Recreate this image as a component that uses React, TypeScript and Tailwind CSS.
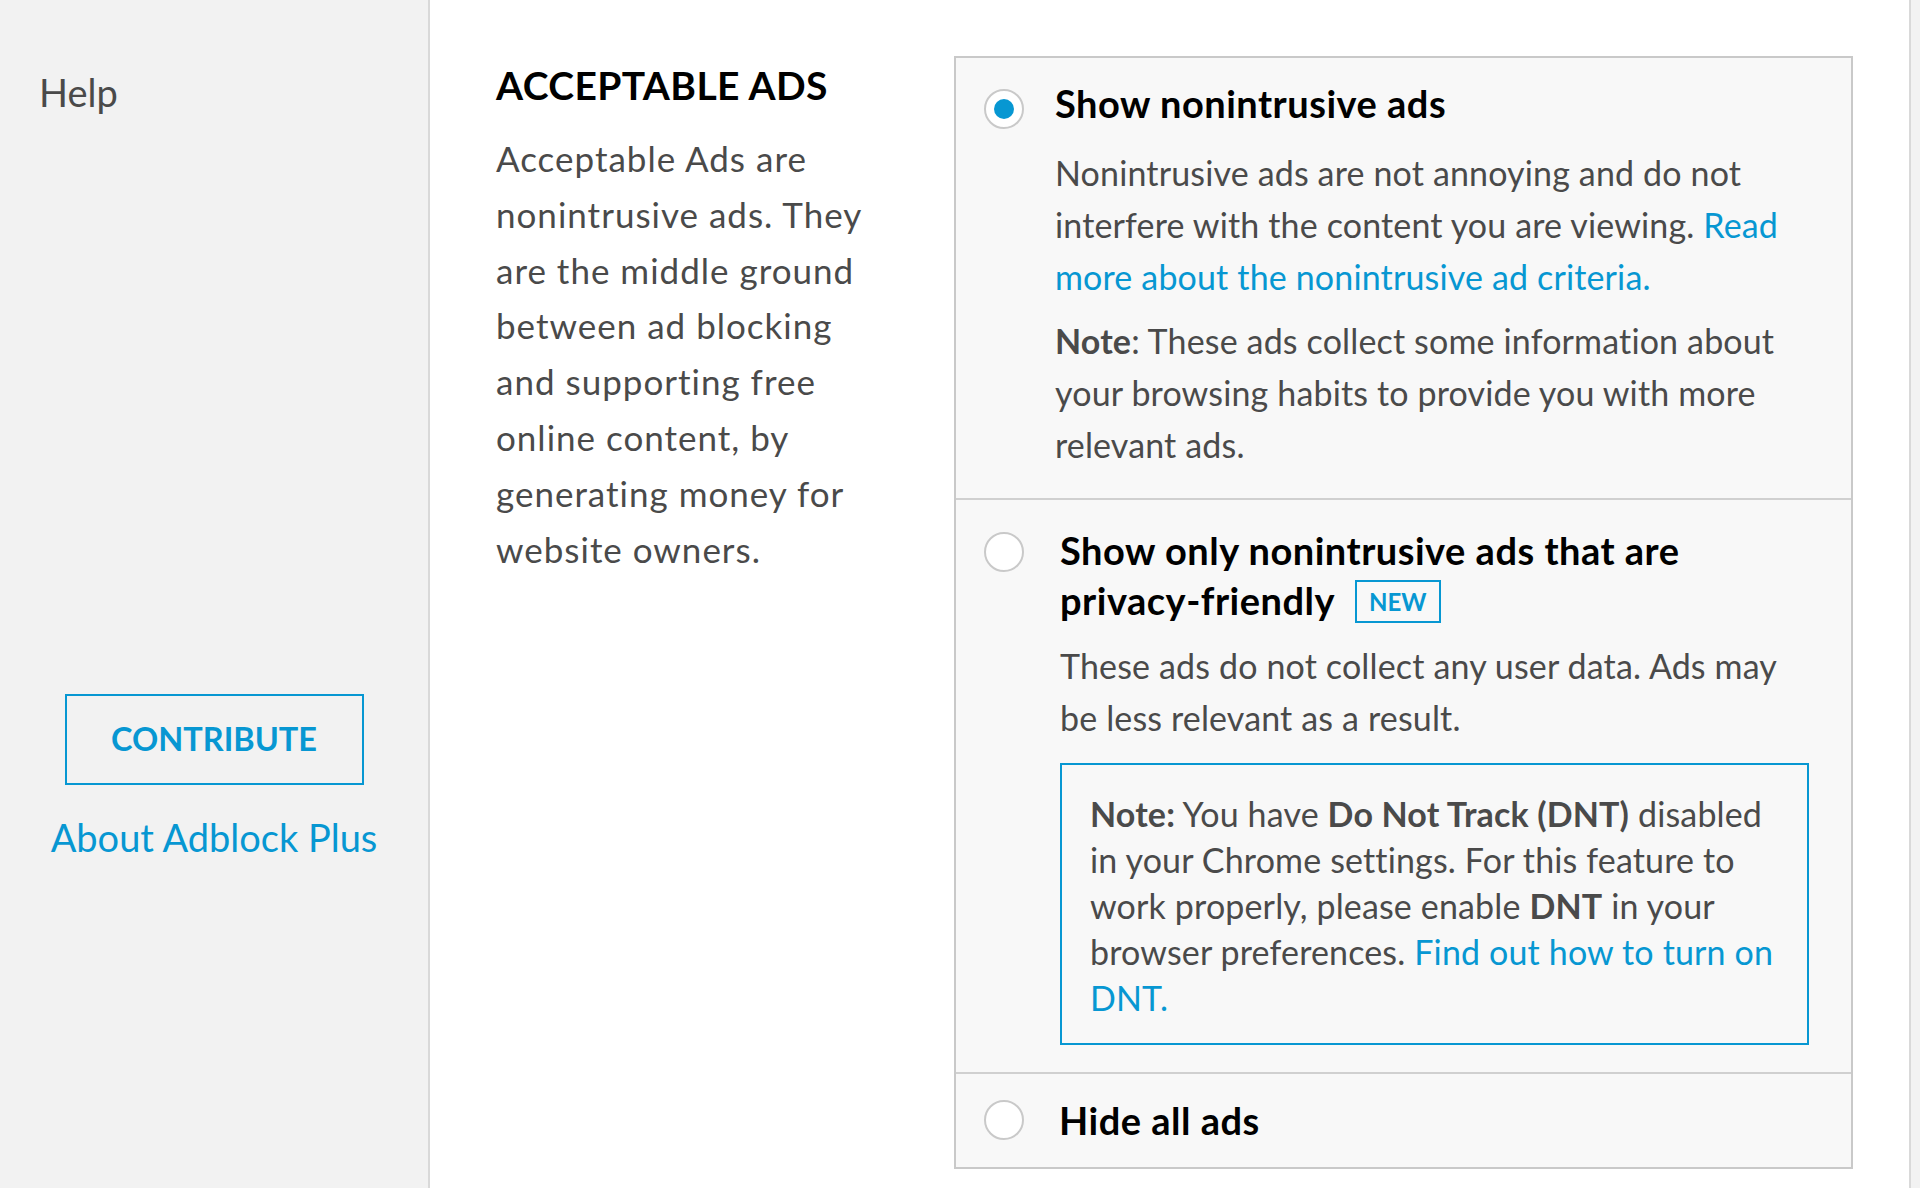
import React from "react";

const blue = "text-[#0797d2]";

function Radio({ checked }: { checked?: boolean }) {
  return (
    <span className="flex h-[40px] w-[40px] shrink-0 items-center justify-center rounded-full border-2 border-[#c9c9c9] bg-white">
      {checked && <span className="h-[20px] w-[20px] rounded-full bg-[#0797d2]" />}
    </span>
  );
}

export default function App() {
  return (
    <div className="flex min-h-screen bg-white font-['Lato',sans-serif] antialiased">
      <aside className="flex w-[430px] shrink-0 flex-col border-r-2 border-[#d9d9d9] bg-[#f2f2f2]">
        <a href="#" className="ml-[39px] mt-[68px] text-[38px] leading-[48px] text-[#4a4a4a]">
          Help
        </a>
        <div className="mt-[578px] flex flex-col items-center">
          <button
            type="button"
            className={`h-[91px] w-[299px] border-2 border-[#0797d2] text-[32.5px] font-bold ${blue}`}
          >
            CONTRIBUTE
          </button>
          <a href="#" className={`mt-[28px] text-[38px] leading-[48px] ${blue}`}>
            About Adblock Plus
          </a>
        </div>
      </aside>

      <main className="flex flex-1 items-start pl-[66px] pt-[56px]">
        <section className="w-[458px] shrink-0 pt-[5px]">
          <h2 className="text-[39px] font-bold leading-[48px] tracking-[0.4px] text-black">
            ACCEPTABLE ADS
          </h2>
          <p className="mt-[22px] w-[392px] text-[35px] leading-[55.8px] tracking-[1px] text-[#4a4a4a]">
            Acceptable Ads are nonintrusive ads. They are the middle ground between ad blocking
            and supporting free online content, by generating money for website owners.
          </p>
        </section>

        <div className="w-[899px] shrink-0 border-2 border-[#c9c9c9] bg-[#f8f8f8]">
          {/* option 1 */}
          <div className="flex border-b-2 border-[#d0d0d0] pb-[27px] pl-[28px] pt-[20px]">
            <div className="mt-[11px]">
              <Radio checked />
            </div>
            <div className="ml-[31px] w-[752px]">
              <h3 className="text-[38px] font-bold leading-[50px] tracking-[0.5px] text-black">
                Show nonintrusive ads
              </h3>
              <p className="mt-[19px] text-[34px] leading-[52px] tracking-[0.15px] text-[#4a4a4a]">
                Nonintrusive ads are not annoying and do not interfere with the content you are
                viewing.{" "}
                <a href="#" className={blue}>
                  Read more about the nonintrusive ad criteria.
                </a>
              </p>
              <p className="mt-[12px] text-[34px] leading-[52px] tracking-[0.15px] text-[#4a4a4a]">
                <strong className="font-bold">Note</strong>: These ads collect some information
                about your browsing habits to provide you with more relevant ads.
              </p>
            </div>
          </div>

          {/* option 2 */}
          <div className="flex border-b-2 border-[#d0d0d0] pb-[27px] pl-[28px] pt-[25px]">
            <div className="mt-[7px]">
              <Radio />
            </div>
            <div className="ml-[36px] w-[749px]">
              <h3 className="text-[38px] font-bold leading-[50px] tracking-[0.5px] text-black">
                Show only nonintrusive ads that are{" "}
                <span className="whitespace-nowrap">
                  privacy-friendly
                  <span
                    className={`ml-[20px] inline-block border-2 border-[#0797d2] px-[12px] align-[4px] text-[24px] font-bold leading-[39px] tracking-normal ${blue}`}
                  >
                    NEW
                  </span>
                </span>
              </h3>
              <p className="mt-[15px] text-[34px] leading-[52px] tracking-[0.15px] text-[#4a4a4a]">
                These ads do not collect any user data. Ads may be less relevant as a result.
              </p>
              <div className="mt-[19px] w-full border-2 border-[#0797d2] px-[28px] pb-[22px] pt-[26px] text-[34px] leading-[46px] tracking-[0.15px] text-[#4a4a4a]">
                <strong className="font-bold">Note:</strong> You have{" "}
                <strong className="font-bold">Do Not Track (DNT)</strong> disabled in your Chrome
                settings. For this feature to work properly, please enable{" "}
                <strong className="font-bold">DNT</strong> in your browser preferences.{" "}
                <a href="#" className={blue}>
                  Find out how to turn on DNT.
                </a>
              </div>
            </div>
          </div>

          {/* option 3 */}
          <div className="flex items-center pb-[22px] pl-[28px] pt-[21px]">
            <Radio />
            <h3 className="ml-[35px] text-[38px] font-bold leading-[50px] tracking-[0.5px] text-black">
              Hide all ads
            </h3>
          </div>
        </div>
      </main>

      <div className="w-[11px] shrink-0 border-l-2 border-[#d9d9d9] bg-[#f2f2f2]" />
    </div>
  );
}
